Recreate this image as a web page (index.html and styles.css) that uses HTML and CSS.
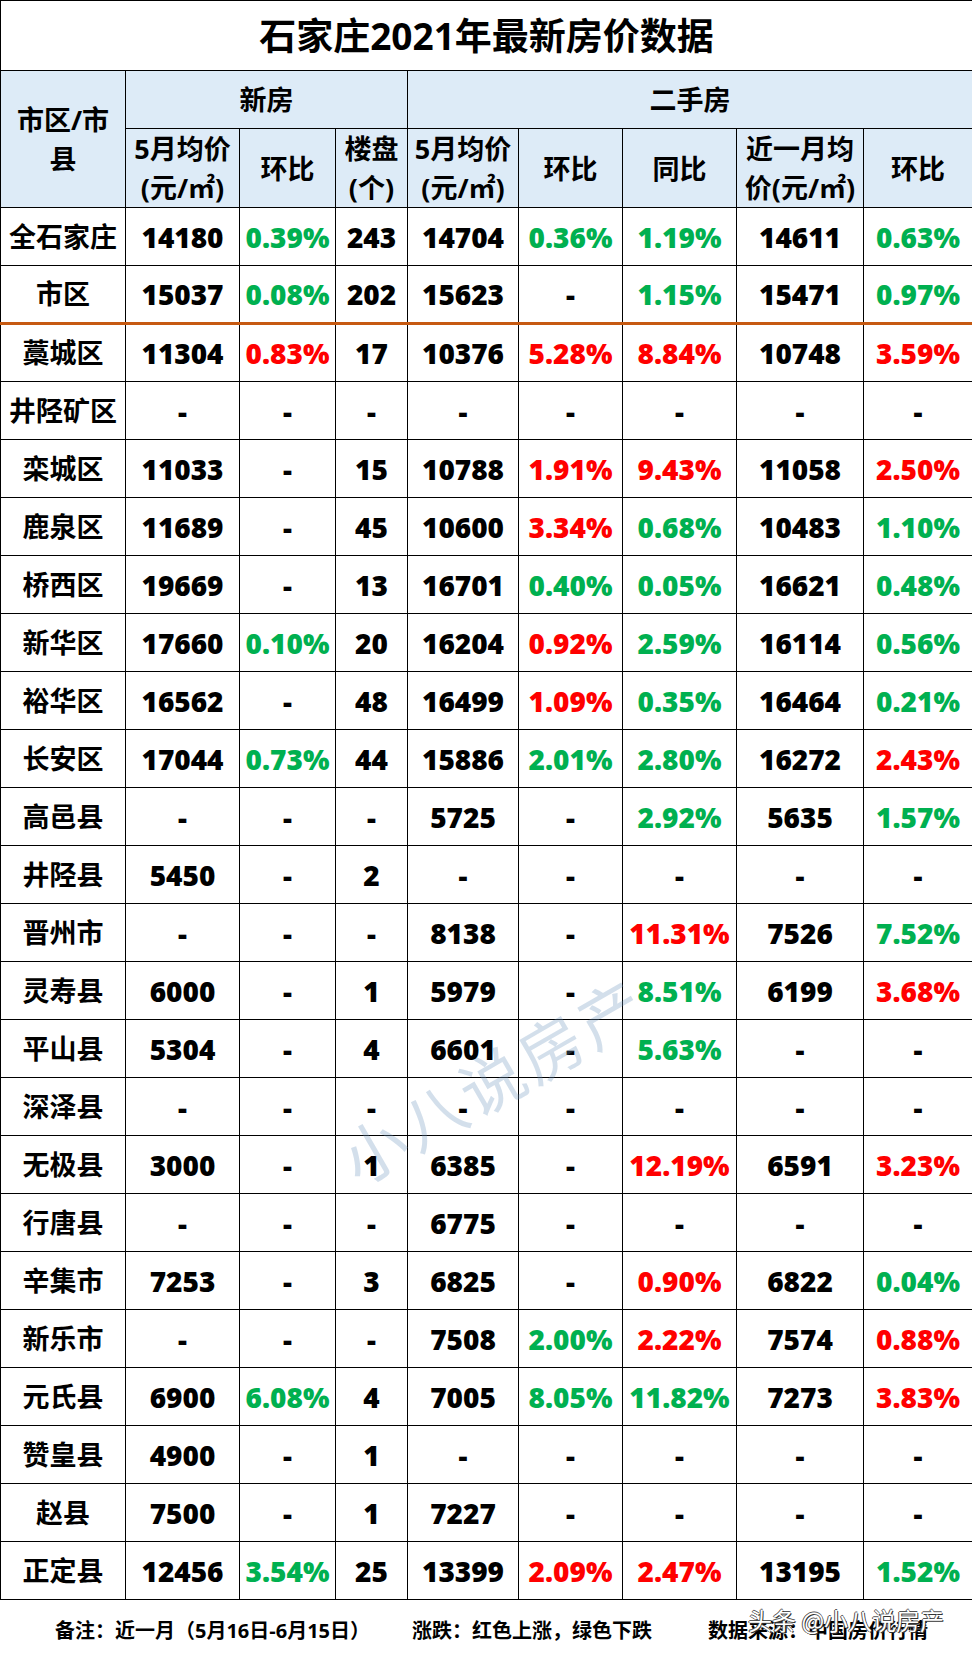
FILE: index.html
```html
<!DOCTYPE html>
<html lang="zh-CN">
<head>
<meta charset="utf-8">
<title>石家庄2021年最新房价数据</title>
<link rel="stylesheet" href="styles.css">
</head>
<body>
<div class="page">
  <table class="sheet">
    <colgroup>
      <col class="c1"><col class="c2"><col class="c3"><col class="c4"><col class="c5"><col class="c6"><col class="c7"><col class="c8"><col class="c9">
    </colgroup>
    <tr class="r-title"><td colspan="9" class="title">石家庄2021年最新房价数据</td></tr>
    <tr class="r-h1">
      <th rowspan="2" class="hd-area">市区/市<br>县</th>
      <th colspan="3">新房</th>
      <th colspan="5">二手房</th>
    </tr>
    <tr class="r-h2">
      <th>5月均价<br>(元/㎡)</th>
      <th>环比</th>
      <th>楼盘<br>(个)</th>
      <th>5月均价<br>(元/㎡)</th>
      <th>环比</th>
      <th>同比</th>
      <th>近一月均<br>价(元/㎡)</th>
      <th>环比</th>
    </tr>
    <tr><td class="name">全石家庄</td><td>14180</td><td class="g">0.39%</td><td>243</td><td>14704</td><td class="g">0.36%</td><td class="g">1.19%</td><td>14611</td><td class="g">0.63%</td></tr>
    <tr class="split"><td class="name">市区</td><td>15037</td><td class="g">0.08%</td><td>202</td><td>15623</td><td>-</td><td class="g">1.15%</td><td>15471</td><td class="g">0.97%</td></tr>
    <tr><td class="name">藁城区</td><td>11304</td><td class="r">0.83%</td><td>17</td><td>10376</td><td class="r">5.28%</td><td class="r">8.84%</td><td>10748</td><td class="r">3.59%</td></tr>
    <tr><td class="name">井陉矿区</td><td>-</td><td>-</td><td>-</td><td>-</td><td>-</td><td>-</td><td>-</td><td>-</td></tr>
    <tr><td class="name">栾城区</td><td>11033</td><td>-</td><td>15</td><td>10788</td><td class="r">1.91%</td><td class="r">9.43%</td><td>11058</td><td class="r">2.50%</td></tr>
    <tr><td class="name">鹿泉区</td><td>11689</td><td>-</td><td>45</td><td>10600</td><td class="r">3.34%</td><td class="g">0.68%</td><td>10483</td><td class="g">1.10%</td></tr>
    <tr><td class="name">桥西区</td><td>19669</td><td>-</td><td>13</td><td>16701</td><td class="g">0.40%</td><td class="g">0.05%</td><td>16621</td><td class="g">0.48%</td></tr>
    <tr><td class="name">新华区</td><td>17660</td><td class="g">0.10%</td><td>20</td><td>16204</td><td class="r">0.92%</td><td class="g">2.59%</td><td>16114</td><td class="g">0.56%</td></tr>
    <tr><td class="name">裕华区</td><td>16562</td><td>-</td><td>48</td><td>16499</td><td class="r">1.09%</td><td class="g">0.35%</td><td>16464</td><td class="g">0.21%</td></tr>
    <tr><td class="name">长安区</td><td>17044</td><td class="g">0.73%</td><td>44</td><td>15886</td><td class="g">2.01%</td><td class="g">2.80%</td><td>16272</td><td class="r">2.43%</td></tr>
    <tr><td class="name">高邑县</td><td>-</td><td>-</td><td>-</td><td>5725</td><td>-</td><td class="g">2.92%</td><td>5635</td><td class="g">1.57%</td></tr>
    <tr><td class="name">井陉县</td><td>5450</td><td>-</td><td>2</td><td>-</td><td>-</td><td>-</td><td>-</td><td>-</td></tr>
    <tr><td class="name">晋州市</td><td>-</td><td>-</td><td>-</td><td>8138</td><td>-</td><td class="r">11.31%</td><td>7526</td><td class="g">7.52%</td></tr>
    <tr><td class="name">灵寿县</td><td>6000</td><td>-</td><td>1</td><td>5979</td><td>-</td><td class="g">8.51%</td><td>6199</td><td class="r">3.68%</td></tr>
    <tr><td class="name">平山县</td><td>5304</td><td>-</td><td>4</td><td>6601</td><td>-</td><td class="g">5.63%</td><td>-</td><td>-</td></tr>
    <tr><td class="name">深泽县</td><td>-</td><td>-</td><td>-</td><td>-</td><td>-</td><td>-</td><td>-</td><td>-</td></tr>
    <tr><td class="name">无极县</td><td>3000</td><td>-</td><td>1</td><td>6385</td><td>-</td><td class="r">12.19%</td><td>6591</td><td class="r">3.23%</td></tr>
    <tr><td class="name">行唐县</td><td>-</td><td>-</td><td>-</td><td>6775</td><td>-</td><td>-</td><td>-</td><td>-</td></tr>
    <tr><td class="name">辛集市</td><td>7253</td><td>-</td><td>3</td><td>6825</td><td>-</td><td class="r">0.90%</td><td>6822</td><td class="g">0.04%</td></tr>
    <tr><td class="name">新乐市</td><td>-</td><td>-</td><td>-</td><td>7508</td><td class="g">2.00%</td><td class="r">2.22%</td><td>7574</td><td class="r">0.88%</td></tr>
    <tr><td class="name">元氏县</td><td>6900</td><td class="g">6.08%</td><td>4</td><td>7005</td><td class="g">8.05%</td><td class="g">11.82%</td><td>7273</td><td class="r">3.83%</td></tr>
    <tr><td class="name">赞皇县</td><td>4900</td><td>-</td><td>1</td><td>-</td><td>-</td><td>-</td><td>-</td><td>-</td></tr>
    <tr><td class="name">赵县</td><td>7500</td><td>-</td><td>1</td><td>7227</td><td>-</td><td>-</td><td>-</td><td>-</td></tr>
    <tr><td class="name">正定县</td><td>12456</td><td class="g">3.54%</td><td>25</td><td>13399</td><td class="r">2.09%</td><td class="r">2.47%</td><td>13195</td><td class="g">1.52%</td></tr>
  </table>
  <div class="watermark">小八说房产</div>
  <div class="notes">
    <span class="note n1">备注：近一月（5月16日-6月15日）</span>
    <span class="note n2">涨跌：红色上涨，绿色下跌</span>
    <span class="note n3">数据来源：中国房价行情</span>
  </div>
  <div class="stamp">头条 @小八说房产</div>
</div>
</body>
</html>
```

FILE: styles.css
```css
html, body {
  margin: 0;
  padding: 0;
  background: #ffffff;
}

.page {
  position: relative;
  width: 972px;
  height: 1656px;
  overflow: hidden;
  font-family: "Open Sans", "Noto Sans CJK SC", sans-serif;
  font-weight: 700;
  color: #000;
}

.sheet {
  border-collapse: collapse;
  table-layout: fixed;
  width: 972px;
}

.c1 { width: 125px; }
.c2 { width: 114px; }
.c3 { width: 96px; }
.c4 { width: 72px; }
.c5 { width: 111px; }
.c6 { width: 104px; }
.c7 { width: 114px; }
.c8 { width: 127px; }
.c9 { width: 109px; }

.sheet td,
.sheet th {
  border: 1px solid #000;
  padding: 0;
  text-align: center;
  vertical-align: middle;
  font-size: 28px;
  line-height: 32px;
  font-weight: 800;
  white-space: nowrap;
}

.sheet tr { height: 58px; }
.sheet .r-title { height: 70px; }
.sheet .r-h1 { height: 58px; }
.sheet .r-h2 { height: 75px; }

.sheet .title {
  font-size: 37px;
  line-height: 44px;
  font-weight: 700;
  background: #fff;
}

.sheet th {
  background: #ddebf7;
  font-size: 27px;
  line-height: 39px;
  font-weight: 700;
}

.sheet .name {
  font-size: 27px;
  font-weight: 700;
}

.sheet .g { color: #00b050; }
.sheet .r { color: #ff0000; }

.sheet .split td {
  border-bottom: 3px solid #c65911;
}

.watermark {
  position: absolute;
  left: 322px;
  top: 1044px;
  width: 340px;
  font-family: "Noto Sans CJK SC", sans-serif;
  font-weight: 400;
  font-size: 64px;
  line-height: 68px;
  letter-spacing: 4px;
  color: rgba(110, 150, 190, 0.3);
  transform: rotate(-30deg);
  transform-origin: center;
  white-space: nowrap;
  pointer-events: none;
}

.notes {
  display: flex;
  align-items: center;
  height: 59px;
  padding-left: 55px;
  font-family: "Open Sans", "Noto Sans CJK SC", sans-serif;
  font-size: 20px;
  font-weight: 700;
  white-space: nowrap;
}

.n2 { margin-left: 42px; }
.n3 { margin-left: 56px; }

.stamp {
  position: absolute;
  left: 748px;
  top: 1606px;
  font-family: "Noto Sans CJK SC", sans-serif;
  font-weight: 400;
  font-size: 24px;
  line-height: 28px;
  color: #ffffff;
  text-shadow: 1px 1px 0 #333, -1px 0 0 #555, 0 -1px 0 #555;
  white-space: nowrap;
}
```
